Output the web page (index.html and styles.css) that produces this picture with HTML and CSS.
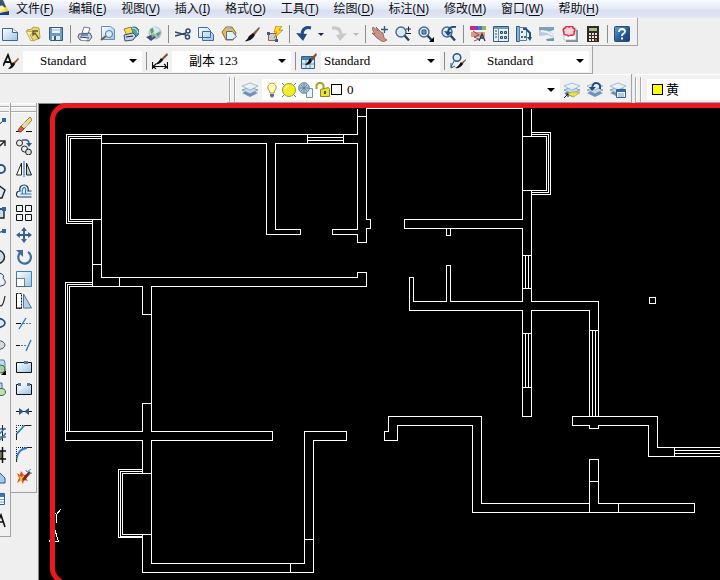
FILE: index.html
```html
<!DOCTYPE html>
<html lang="zh-CN">
<head>
<meta charset="utf-8">
<title>CAD</title>
<link rel="stylesheet" href="styles.css">
</head>
<body>
<svg class="defs" aria-hidden="true">
  <defs>
    <linearGradient id="page" x1="0" y1="0" x2="1" y2="1"><stop offset="0" stop-color="#fff"/><stop offset="1" stop-color="#9cc4e4"/></linearGradient>
    <linearGradient id="help" x1="0" y1="0" x2="1" y2="1"><stop offset="0" stop-color="#6fa0cc"/><stop offset=".5" stop-color="#2b629c"/><stop offset="1" stop-color="#123c70"/></linearGradient>
    <symbol id="layers" viewBox="0 0 16 16">
      <path d="M0 11l8-3 8 3-8 4z" fill="#6f93b5"/><path d="M0 8l8-3 8 3-8 4z" fill="#c3d8ea" stroke="#587c9f" stroke-width=".6"/><path d="M0 4l8-3 8 3-8 4z" fill="#e8f1f8" stroke="#86a6c2" stroke-width=".7"/>
    </symbol>
    <symbol id="lens" viewBox="0 0 16 16">
      <path d="M9.500 9.500l4.500 5" stroke="#27415e" stroke-width="2.400"/><circle cx="6" cy="6" r="5" fill="#d9eaf6" stroke="#47688a" stroke-width="1.400"/><path d="M3 5q1-2 3-2" stroke="#fff" fill="none"/>
    </symbol>
    <symbol id="brush" viewBox="0 0 16 16">
      <path d="M15 1L8 8l2 2 6-8z" fill="#8b5736"/><path d="M9 7l2 2-2 3q-4 4-8 3 3-2 4-5z" fill="#151515"/>
    </symbol>
    <symbol id="printer" viewBox="0 0 16 16">
      <path d="M5 7L7 1l6 1-2 6z" fill="#fff" stroke="#557" stroke-width=".8"/><path d="M2 8l11-1 2 4-3 4-9-1-2-3z" fill="#c4d0e2" stroke="#3b4d72" stroke-width=".9"/><path d="M3 11l9 1M4 9h7" stroke="#34466c"/><path d="M5 12l5 .5-1 2-5-.5z" fill="#fff"/>
    </symbol>
  </defs>
</svg>

<nav class="menubar" aria-label="菜单">
  <svg class="app" viewBox="0 0 9 16"><path d="M0 1l4 1 5 9-9 1z" fill="#f3d535"/><path d="M0 0h3l3 7-6 2z" fill="#35567b"/><path d="M0 6q3-2 5 3l-5 3z" fill="#fff5a5"/><path d="M0 13l9-2v4H0z" fill="#183d83"/></svg>
  <a href="#">文件(<u>F</u>)</a><a href="#">编辑(<u>E</u>)</a><a href="#">视图(<u>V</u>)</a><a href="#">插入(<u>I</u>)</a><a href="#">格式(<u>O</u>)</a><a href="#">工具(<u>T</u>)</a><a href="#">绘图(<u>D</u>)</a><a href="#">标注(<u>N</u>)</a><a href="#">修改(<u>M</u>)</a><a href="#">窗口(<u>W</u>)</a><a href="#">帮助(<u>H</u>)</a>
</nav>

<div class="row">
  <div class="toolbar standard">
    <button aria-label="新建"><svg viewBox="0 0 16 16"><path d="M.5 2.500h10l5 4v8H.5z" fill="url(#page)" stroke="#3c668e"/><path d="M10.500 2.500v4h5" fill="#fff" stroke="#3c668e"/></svg></button>
    <button aria-label="打开"><svg viewBox="0 0 16 16"><path d="M2 4l5-1 1-2 6 1 1 10-7 3z" fill="#ead77c" stroke="#a88d35" stroke-width=".8"/><path d="M1 5l8 1-4 3 3 5-2 1z" fill="#faefa9" stroke="#a88d35" stroke-width=".7"/><path d="M13 5H8v4l2-2 4 6" stroke="#5c5526" stroke-width="1.300" fill="none"/></svg></button>
    <button aria-label="保存"><svg viewBox="0 0 16 16"><path d="M1.500 1.500h13v13h-12l-1-1z" fill="#6d9cc3" stroke="#335b82"/><path d="M4 2h8v5H4z" fill="#edf5fa"/><path d="M4 4h8" stroke="#9ab6cc"/><path d="M4 10h8v4H4z" fill="#e1e9ef"/><path d="M6 10h2v4H6z" fill="#37597c"/></svg></button>
    <span class="sep"></span>
    <button aria-label="打印"><svg><use href="#printer"/></svg></button>
    <button aria-label="打印预览"><svg viewBox="0 0 16 16"><path d="M1.500.5h9l4 3v10h-13z" fill="url(#page)" stroke="#688caf"/><path d="M6 10l-5 4" stroke="#765c45" stroke-width="2"/><circle cx="9" cy="8" r="3.500" fill="#d9edf8" stroke="#547492"/></svg></button>
    <button aria-label="发布"><svg viewBox="0 0 16 16"><circle cx="11" cy="6" r="5" fill="#4fa1a8" stroke="#275c70"/><path d="M9 2q5 0 6 5" stroke="#d7f1e9" fill="none"/><path d="M1 3l7-2 2 6-6 3z" fill="#f6dc50" stroke="#756014" stroke-width=".7"/><path d="M1 9l9-2 3 3-3 4-8 1z" fill="#c7d5e6" stroke="#394c70"/><path d="M3 11l7-1" stroke="#222"/></svg></button>
    <button aria-label="三维 DWF"><svg viewBox="0 0 16 16"><circle cx="9" cy="7" r="6.500" fill="#a5bccd"/><path d="M5 2q5-3 9 2l-3 4-4-1-3 2q-1-5 1-7z" fill="#d9e9ef"/><path d="M4 3l3-1 1 4-3 2zM10 7l5-1-3 5z" fill="#5c9d75"/><path d="M0 11l5-2 5 2-5 4z" fill="#3c4f80"/><path d="M5 8l4 1-3 3z" fill="#88b34a"/></svg></button>
    <span class="sep"></span>
    <button aria-label="剪切"><svg viewBox="0 0 16 16"><path d="M0 6l11 3M0 10l11-3" stroke="#36465a" stroke-width="1.300"/><g fill="none" stroke="#2b496a" stroke-width="1.500"><circle cx="13" cy="5" r="2"/><circle cx="12.500" cy="11" r="2"/></g></svg></button>
    <button aria-label="复制"><svg viewBox="0 0 16 16"><path d="M.5 1.500h9l3 3v7H.5zM4.500 5.500h8l3 3v6h-11z" fill="url(#page)" stroke="#3d6d98"/></svg></button>
    <button aria-label="粘贴"><svg viewBox="0 0 16 16"><path d="M1 6l4-5h6l4 6-3 7H5z" fill="#ddc05f" stroke="#8e6e21"/><path d="M5 2l3-2 3 3z" fill="#9aa8b6"/><path d="M5.500 5.500h6l4 5-4 3h-6z" fill="#e3f0fa" stroke="#4c7192"/></svg></button>
    <button aria-label="特性匹配"><svg><use href="#brush"/></svg></button>
    <button aria-label="块编辑器"><svg viewBox="0 0 16 16"><path d="M1.500 7.500h8v7h-8z" fill="#bdd1e1" stroke="#b55b2a"/><path d="M0 6h3v3H0zM8 13h3v3H8z" fill="#345f89"/><path d="M9 0h6l-3 4h4l-9 8 3-6H7z" fill="#ffd62c" stroke="#b07800" stroke-width=".7"/></svg></button>
    <span class="sep"></span>
    <button aria-label="放弃"><svg viewBox="0 0 16 16"><path d="M15 2Q7 0 6 8" fill="none" stroke="#234b83" stroke-width="3"/><path d="M0 7l11 1-4 7z" fill="#234b83"/></svg></button>
    <button class="caret" aria-label="放弃列表"></button>
    <button aria-label="重做"><svg viewBox="0 0 16 16"><path d="M1 2q8-1 9 6" fill="none" stroke="#c8c8c8" stroke-width="3"/><path d="M16 7L5 9l4 6z" fill="#c8c8c8"/></svg></button>
    <button class="caret off" aria-label="重做列表"></button>
    <span class="sep"></span>
    <button aria-label="实时平移"><svg viewBox="0 0 16 16"><path d="M1 1l5 4-2-4 5 5 2 1 1 5 3 2-4 2-6-4-5-5 3 1-3-5z" fill="#cd9286" stroke="#855c5b" stroke-width=".8"/><path d="M12.500 0v7M9 3.500h7" stroke="#31577e" stroke-width="1.300"/></svg></button>
    <button aria-label="实时缩放"><svg viewBox="0 0 16 16"><use href="#lens"/><path d="M11 3h5M13.500.5v5M11 7.500h5" stroke="#222"/></svg></button>
    <button aria-label="窗口缩放"><svg viewBox="0 0 16 16"><use href="#lens"/><path d="M4 4h4v4H4z" fill="#7198b9" stroke="#31577e"/><path d="M16 11v5h-5z"/></svg></button>
    <button aria-label="缩放上一个"><svg viewBox="0 0 16 16"><use href="#lens"/><path d="M15 1Q8 0 7 6" stroke="#234b78" stroke-width="2" fill="none"/><path d="M3 5l8 1-4 4z" fill="#234b78"/></svg></button>
    <span class="sep"></span>
    <button aria-label="特性"><svg viewBox="0 0 16 16"><path d="M0 0h4v4H0z" fill="#e6225a"/><path d="M4 0h4v4H4z" fill="#7940c9"/><path d="M8 0h4v4H8z" fill="#3f75d5"/><path d="M12 0h4v4h-4z" fill="#8abe45"/><path d="M1 6h14v5H1z" fill="#df9889"/><path d="M3 5l6 4-5 2 5 2-5 2" stroke="#73545b" fill="none"/><path d="M9 15l3-7 3 7M10 12h4" stroke="#223a52" fill="none" stroke-width="1.300"/></svg></button>
    <button aria-label="设计中心"><svg viewBox="0 0 16 16"><path d="M.5.500h15v15H.5z" fill="#e5f1f8" stroke="#32597f"/><path d="M1 1h14v2H1z" fill="#6f9abd"/><path d="M5.500 3v12" stroke="#6e91b0"/><path d="M2 5h2M2 8h2M2 11h2" stroke="#284d72"/><path d="M7.500 5.500h2v2h-2zM11.500 5.500h2v2h-2zM7.500 10.500h2v2h-2zM11.500 10.500h2v2h-2z" fill="#9ebdd4" stroke="#2b4b6d"/></svg></button>
    <button aria-label="工具选项板"><svg viewBox="0 0 16 16"><path d="M.5.500h3v15h-3z" fill="#8fb2cf" stroke="#32597f"/><path d="M3.500 1.500h7v13h-7z" fill="#e5f1f8" stroke="#567d9f"/><path d="M5 5h2v2H5zM5 10h2v2H5zM8 10h2v2H8z" fill="#426f98"/><path d="M7 3h3l4 4v6" stroke="#29507a" stroke-width="2" fill="none"/><path d="M11 11h5l-2 4z" fill="#29507a"/></svg></button>
    <button aria-label="图纸集管理器"><svg viewBox="0 0 16 16"><path d="M0 1h15v3l-6 2-9-1z" fill="#7aa2ba"/><path d="M0 4l9 1 6 3v4l-6-3-9 1z" fill="#b9cbd5"/><path d="M2 5l6 1 7 4" stroke="#eaf3f7" stroke-width="2" fill="none"/><path d="M7 13l8-1v3H8z" fill="#7195ae"/></svg></button>
    <button aria-label="标记集管理器"><svg viewBox="0 0 16 16"><path d="M4 4h12v12H4z" fill="#83929f"/><path d="M2 2h12v12H2z" fill="#fff" stroke="#8aa" stroke-width=".6"/><path d="M3 2q2-3 4-1 4-2 4 1 3 1 1 4 1 4-3 3-3 2-4 0-4 0-3-3-2-3 1-4z" fill="#f6d3da" stroke="#dd2841" stroke-width="1.500"/></svg></button>
    <button aria-label="计算器"><svg viewBox="0 0 16 16"><path d="M2 0h12v16H2z" fill="#302926"/><path d="M4 2h8v3H4z" fill="#a3be8d"/><path d="M4 7h2v2H4zM7 7h2v2H7zM10 7h2v2h-2zM4 10h2v2H4zM7 10h2v2H7zM10 10h2v2h-2zM4 13h2v2H4zM7 13h2v2H7z" fill="#e9e0db"/><path d="M10 13h2v2h-2z" fill="#c93f31"/></svg></button>
    <span class="sep"></span>
    <button aria-label="帮助"><svg viewBox="0 0 16 16"><rect x=".5" y=".5" width="15" height="15" rx="1" fill="url(#help)" stroke="#244d7c"/><path d="M5 6q0-3 3-3t3 2.500q0 1.500-2 2.500-1 .5-1 2" fill="none" stroke="#fff" stroke-width="1.800"/><path d="M7 11.500h2v2H7z" fill="#fff"/></svg></button>
  </div>
</div>

<div class="row">
  <div class="toolbar styles">
    <label class="field"><svg viewBox="0 0 16 16" aria-label="文字样式"><path d="M0 13L5 2l4 11M2 9h6" fill="none" stroke="#111" stroke-width="1.800"/><path d="M15 5l-5 5 1 2 5-6z" fill="#8b5736"/><path d="M10 9l2 2q-2 5-7 5 3-3 5-7z" fill="#111"/></svg><span class="combo pad"><select><option>Standard</option></select></span></label>
    <span class="sep"></span>
    <label class="field"><svg viewBox="0 0 16 16" aria-label="标注样式"><path d="M.5 9v7M15.500 9v7M1 13.500h14M4 11l-3 2.500L4 16M12 11l3 2.500-3 2.500" stroke="#111" fill="none" stroke-width="1.200"/><path d="M15 0L8 7l2 1 6-6z" fill="#825135"/><path d="M9 5l2 2q-3 5-8 4 3-1 6-6z" fill="#111"/></svg><span class="combo pad"><select><option>副本 123</option></select></span></label>
    <span class="sep"></span>
    <label class="field"><svg viewBox="0 0 16 16" aria-label="表格样式"><path d="M.5 3.500h13v12H.5z" fill="#dcebf6" stroke="#315f93"/><path d="M1 4h12v3H1z" fill="#4d81b5"/><path d="M1 11h12M5 7v8M9 7v8" stroke="#6293c0"/><path d="M15 0L9 6l2 2 5-6z" fill="#825135"/><path d="M9 5l2 3q-2 4-7 4 3-2 5-7z" fill="#111"/></svg><span class="combo"><select><option>Standard</option></select></span></label>
    <span class="sep"></span>
    <label class="field"><svg viewBox="0 0 16 16" aria-label="多重引线样式"><circle cx="7" cy="4.500" r="3.800" fill="#dcecf8" stroke="#28588a" stroke-width="1.500"/><path d="M4 8l-3 6M1 10v5l4-2" stroke="#28588a" fill="none"/><path d="M16 6l-5 4 1 2 4-5z" fill="#825135"/><path d="M11 9l2 2q-3 5-8 4 3-1 6-6z" fill="#111"/></svg><span class="combo pad"><select><option>Standard</option></select></span></label>
  </div>
</div>

<div class="row layer-row">
  <div class="toolbar layer">
    <span class="grip"></span>
    <button aria-label="图层特性"><svg><use href="#layers"/></svg></button>
    <label class="combo layers-combo" aria-label="图层">
      <span class="marks">
        <svg viewBox="0 0 16 16"><path d="M6 11q0-2-2-4-1-5 4-6 5 1 4 6-2 2-2 4z" fill="#fffbc1" stroke="#b39a28"/><path d="M6 12h4v2l-2 2-2-2z" fill="#57718c"/></svg>
        <svg viewBox="0 0 16 16"><path d="M1 1l14 14M15 1L1 15" stroke="#4d7c9c"/><circle cx="8" cy="8" r="6.500" fill="#f2ec25" stroke="#9d9e31"/><path d="M4 7q1-3 4-3" stroke="#fffdc5" stroke-width="1.500" fill="none"/></svg>
        <svg viewBox="0 0 16 16"><path d="M8.500 6.500h6v9h-6z" fill="#e9f1f5" stroke="#7294a7"/><circle cx="6" cy="6" r="5.300" fill="#a6c0cd" stroke="#6a899d"/><path d="M1 6h10M6 1v10M3 3l6 6M9 3L3 9" stroke="#557f98" stroke-width=".8"/></svg>
        <svg viewBox="0 0 16 16"><path d="M1.500 7V3l2-2h3l2 2v5" fill="none" stroke="#a5a32c" stroke-width="2"/><path d="M5.500 7.500l8-2 1 2v7h-9z" fill="#e8e337" stroke="#8d8a22"/><path d="M9 9h2v3H9z" fill="#5d5a13"/></svg>
      </span>
      <i class="swatch white"></i>
      <select><option>0</option></select>
    </label>
    <button aria-label="置为当前"><svg viewBox="0 0 16 16"><use href="#layers"/><path d="M3 12l5-2 8 0-6 5z" fill="#e6df4e" stroke="#aaa029" stroke-width=".6"/><path d="M0 16l4-4M1.500 12H4v3" stroke="#111" fill="none"/></svg></button>
    <button aria-label="上一个图层"><svg viewBox="0 0 16 16"><use href="#layers"/><path d="M13 7Q14 1 9 1 6 1 5 6" fill="none" stroke="#244d7b" stroke-width="2"/><path d="M2 5h7L5 9z" fill="#244d7b"/></svg></button>
    <button aria-label="图层状态"><svg viewBox="0 0 16 16"><use href="#layers"/><path d="M6.500 7.500h9v8h-9z" fill="#eff7fd" stroke="#31618f"/><path d="M7 8h8v2H7z" fill="#386ca1"/><path d="M8 12h6M8 14h6" stroke="#7d9eba"/></svg></button>
  </div>
  <div class="toolbar properties">
    <span class="grip"></span>
    <label class="combo color-combo" aria-label="颜色"><i class="swatch yellow"></i><select><option>黄</option></select></label>
  </div>
</div>

<main class="workspace">
  <div class="toolbar side draw">
    <span class="grip"></span>
    <button aria-label="直线"><svg viewBox="0 0 16 16"><path d="M2 14L14 3" stroke="#222"/><path d="M12 1h4v4h-4z" fill="#32669f"/></svg></button>
    <button aria-label="构造线"><svg viewBox="0 0 16 16"><path d="M1 15L14 3M10 2h5v5" stroke="#222" fill="none" stroke-width="1.400"/></svg></button>
    <button aria-label="多段线"><svg viewBox="0 0 16 16"><path d="M2 4h9a4 4 0 010 8H3" stroke="#28588b" fill="none" stroke-width="2"/></svg></button>
    <button aria-label="正多边形"><svg viewBox="0 0 16 16"><path d="M1 7l7-5 7 5-3 8H4z" fill="#dceaf6" stroke="#222" stroke-width="1.400"/></svg></button>
    <button aria-label="矩形"><svg viewBox="0 0 16 16"><path d="M1 4h13v9H1z" fill="#c9dff0" stroke="#222" stroke-width="1.400"/><path d="M12 2h4v4h-4z" fill="#32669f"/></svg></button>
    <button aria-label="圆弧"><svg viewBox="0 0 16 16"><path d="M3 15Q3 6 14 4" stroke="#222" fill="none"/><path d="M12 2h4v4h-4z" fill="#32669f"/></svg></button>
    <button aria-label="圆"><svg viewBox="0 0 16 16"><circle cx="8" cy="8" r="6.500" fill="#c9dff0" stroke="#222" stroke-width="1.400"/></svg></button>
    <button aria-label="修订云线"><svg viewBox="0 0 16 16"><path d="M4 3q4-3 8 0 3 2 1 4 4 4 1 7-5 3-9 0-5-4-1-11z" fill="#eaf2f7" stroke="#33475c"/></svg></button>
    <button aria-label="样条曲线"><svg viewBox="0 0 16 16"><path d="M1 14q3-15 7-5t7-6" stroke="#333" fill="none" stroke-width="1.300"/></svg></button>
    <button aria-label="椭圆"><svg viewBox="0 0 16 16"><ellipse cx="8" cy="8" rx="7" ry="4.500" fill="#d9e9f5" stroke="#23496e" stroke-width="1.600"/></svg></button>
    <button aria-label="椭圆弧"><svg viewBox="0 0 16 16"><ellipse cx="8" cy="8" rx="7" ry="4.500" fill="#d5d9dd" stroke="#48525c"/></svg></button>
    <button aria-label="插入块"><svg viewBox="0 0 16 16"><path d="M1 1h13l1 3v7H1z" fill="#c3dbee" stroke="#5383a9"/><circle cx="11" cy="10" r="4" fill="#accba6" stroke="#3b704b"/><path d="M16 11v5h-5z"/></svg></button>
    <button aria-label="创建块"><svg viewBox="0 0 16 16"><path d="M2 2h10v8H2z" fill="#c3dbee" stroke="#396894"/><ellipse cx="11" cy="11" rx="4.500" ry="3.500" fill="#c4dfb5" stroke="#386c3b"/></svg></button>
    <button aria-label="点"><svg viewBox="0 0 16 16"><path d="M7 7h2v2H7z"/></svg></button>
    <button aria-label="图案填充"><svg viewBox="0 0 16 16"><path d="M0 4h16M0 12h16M12.500 0v16M4 0v16" stroke="#222"/><path d="M1 11L9 1M4 15L15 3M10 15l6-7" stroke="#377abc" stroke-width="1.500"/></svg></button>
    <button aria-label="渐变色"><svg viewBox="0 0 16 16"><path d="M4 4h8v8H4z" fill="#6f7e5a"/><path d="M0 4h16M0 12h16M12.500 0v16M4 0v16" stroke="#111" stroke-width="1.500"/></svg></button>
    <button aria-label="面域"><svg viewBox="0 0 16 16"><path d="M1 14V6l7-4 7 7v5z" fill="#a8c9e5" stroke="#28588b"/></svg></button>
    <button aria-label="表格"><svg viewBox="0 0 16 16"><path d="M1 2.500h13.500v11H1z" fill="#fff" stroke="#2c65a0"/><path d="M1 3h13v3H1z" fill="#3d78b5"/><path d="M1 8.500h13M1 11h13" stroke="#6d9cc8"/></svg></button>
    <button aria-label="多行文字"><svg viewBox="0 0 16 16"><path d="M6 14l5-12 4 12M8 9h6" fill="none" stroke="#111" stroke-width="1.600"/></svg></button>
  </div>
  <div class="toolbar side modify">
    <span class="grip"></span>
    <button aria-label="删除"><svg viewBox="0 0 16 16"><path d="M0 14.500h4M10 14.500h6" stroke="#111"/><path d="M14 0l2 3-8 9-3-3z" fill="#f4dc6f" stroke="#7a6631" stroke-width=".8"/><path d="M9 5l3 3-2 2-3-3z" fill="#d3dce6"/><path d="M5 9l3 3-3 3H3l-1-2z" fill="#df5648" stroke="#762d29" stroke-width=".7"/></svg></button>
    <button aria-label="复制对象"><svg viewBox="0 0 16 16"><circle cx="3.500" cy="4" r="3" fill="#eee" stroke="#222"/><circle cx="8.500" cy="10" r="3" fill="#eee" stroke="#222"/><circle cx="12.500" cy="13" r="2.900" fill="#d4dde4" stroke="#222"/><path d="M6 1h4q3 0 3 4" fill="none" stroke="#305f96" stroke-width="1.500"/><path d="M10 4h6l-3 4z" fill="#305f96"/></svg></button>
    <button aria-label="镜像"><svg viewBox="0 0 16 16"><path d="M5.500 2v12H.5z" fill="#fff" stroke="#222"/><path d="M10.500 2v12h5z" fill="#b7cfe0" stroke="#222"/><path d="M8 0v16" stroke="#2b83cb" stroke-width="1.200"/></svg></button>
    <button aria-label="偏移"><svg viewBox="0 0 16 16"><path d="M15.500 14H3C-.5 14-.5 8 4 8 2 0 14 0 12 8h3.500" fill="#e4eff8" stroke="#223a50" stroke-width="1.200"/><path d="M15.500 11H4.500M6.500 11C5 3 11 3 9.500 8v3" fill="none" stroke="#317fc4" stroke-width="1.200"/></svg></button>
    <button aria-label="阵列"><svg viewBox="0 0 16 16"><path d="M.5.500h6v6h-6zM9.500.500h6v6h-6zM.5 9.500h6v6h-6zM9.500 9.500h6v6h-6z" fill="#edf4f8" stroke="#111"/></svg></button>
    <button aria-label="移动"><svg viewBox="0 0 16 16"><path d="M8 1v14M1 8h14" stroke="#385f87" stroke-width="2"/><path d="M8 0l3 4H5zM8 16l3-4H5zM0 8l4-3v6zM16 8l-4-3v6z" fill="#3b658f"/></svg></button>
    <button aria-label="旋转"><svg viewBox="0 0 16 16"><path d="M4 4a6.300 6.300 0 108-1" fill="none" stroke="#406d9e" stroke-width="2.200"/><path d="M0 1h7v7z" fill="#406d9e"/></svg></button>
    <button aria-label="缩放"><svg viewBox="0 0 16 16"><path d="M.5.500h15v15H.5z" fill="url(#page)" stroke="#417eb4"/><path d="M.5 7.500h8v8h-8z" fill="#fff" stroke="#111" stroke-dasharray="1 1"/></svg></button>
    <button aria-label="拉伸"><svg viewBox="0 0 16 16"><path d="M.5.500h5v15h-5z" fill="#fff" stroke="#111" stroke-dasharray="2 1"/><path d="M7.500 1l8 14h-8z" fill="#b6d0e5" stroke="#4c7494"/><path d="M.5 1v14h5" fill="none" stroke="#111"/></svg></button>
    <button aria-label="修剪"><svg viewBox="0 0 16 16"><path d="M0 8.500h5" stroke="#111"/><path d="M7 8.500h9" stroke="#4e7eaa" stroke-dasharray="2 1"/><path d="M3 14L10 3" stroke="#2473bd" stroke-width="1.300"/></svg></button>
    <button aria-label="延伸"><svg viewBox="0 0 16 16"><path d="M0 8.500h4" stroke="#111"/><path d="M5 8.500h6" stroke="#4e7eaa" stroke-dasharray="2 1"/><path d="M10 14l5-11" stroke="#2473bd" stroke-width="1.300"/></svg></button>
    <button aria-label="打断于点"><svg viewBox="0 0 16 16"><path d="M.5 3.500h15v10H.5z" fill="url(#page)" stroke="#111"/><path d="M8 2h4v3H8z" fill="#547c9f"/></svg></button>
    <button aria-label="打断"><svg viewBox="0 0 16 16"><path d="M1 4h14v9H1z" fill="url(#page)"/><path d="M3 3.500H.5v10h15v-10H13" fill="none" stroke="#111"/><path d="M2 2h3v3H2zM11 2h3v3h-3z" fill="#547c9f"/></svg></button>
    <button aria-label="合并"><svg viewBox="0 0 16 16"><path d="M0 8.500h16" stroke="#111"/><path d="M3 5l5 3.500L3 12zM13 5L8 8.500l5 3.500z" fill="#355979"/></svg></button>
    <button aria-label="倒角"><svg viewBox="0 0 16 16"><path d="M.5 15V.5H9" stroke="#111" fill="none" stroke-dasharray="1 1"/><path d="M.5 15V9l8-8.500h7" stroke="#222" fill="none"/><path d="M.5 9l8-8.500" stroke="#2d7cc2" stroke-width="1.600"/></svg></button>
    <button aria-label="圆角"><svg viewBox="0 0 16 16"><path d="M.5 15V.5H11" stroke="#111" fill="none" stroke-dasharray="1 1"/><path d="M.5 15Q0 2 11 .5h5" fill="none" stroke="#222"/><path d="M1 11Q2 2 11 1" fill="none" stroke="#2d7cc2" stroke-width="1.800"/></svg></button>
    <button aria-label="分解"><svg viewBox="0 0 16 16"><path d="M1 4l3 2 1-4 3 4 4-1-2 4 2 3-4-1-1 4-2-4-4 3 2-5z" fill="#e44b22"/><path d="M3 7l3 1 2-2v3l-3 4z" fill="#ffc529"/><path d="M6 10l7-8 2 2-7 8z" fill="#6a3026"/><path d="M11 3l4-3M13 5l3-1M10 1l1 2" stroke="#5589b6"/></svg></button>
  </div>
  <section class="canvas" aria-label="平面图">
    <svg class="plan" role="img" aria-label="户型平面图">
      <g transform="translate(-39 -104)">
        <g class="walls" transform="translate(.5 .5)">
          <path d="M101 134V277H357V272H366V286H151V431H272V440H151V563H304V431H346V440H313V572H142V534H151M142 473V440H65V282H92V219M101 134H66V223H92M92 221H68V136H101M101 138H70V219H101M92 264H101M119 277V286"/>
          <path d="M92 282V286M92 284H67V431M142 286H69V431M65 431H142V403H151M142 286V314H151"/>
          <path d="M101 134H357V108M101 143H266V234H300V229H275V143H357V229H332V234H357V242H366V228H370V219H366V108H522V219H404V228H522V301H450V265H446V301H413V277H409V310H522V416H531V310H589V416M357 116H366M307 134V143M343 134V143M307 137H343M307 140H343"/>
          <path d="M446 228V235H450V228M531 108V136M522 136H546V190H522V136M531 132H550V194H531M531 134H548V192H531M522 190V219M531 190V301H598V416M522 255H531M522 288H531M525 255V288M528 255V288M522 333H531M522 387H531M525 333V387M528 333V387M589 330H598M592 330V416M595 330V416"/>
          <path d="M2000 447H657V416H572V425H589V428H598V425H648V456H2000M674 447V456M674 450H2000M674 453H2000"/>
          <path d="M589 503H481V416H388V431H384V440H397V425H472V512H694V503H598V459H589V512M589 481H598M618 503V512"/>
          <path d="M142 469H118V537H142M142 471H120V536H142M151 473H122V534H151M142 469V473M304 539H313M290 563V572"/>
          <path d="M649 297H655V303H649Z"/>
          <path d="M60 509L56 514V522M52 510L56 514M54 528L49 541H58Z"/>
        </g>
        <path class="frame" d="M2000 105.500H67A14.500 14.500 0 0 0 52.500 120V570Q53 576 61 582"/>
      </g>
    </svg>
  </section>
</main>
</body>
</html>
```
FILE: styles.css
```css
* { box-sizing: border-box; }

body {
  margin: 0;
  height: 100vh;
  overflow: hidden;
  display: flex;
  flex-direction: column;
  background: #efefef;
  color: #111;
  font: 12px/16px "Noto Sans", "Noto Sans CJK SC", sans-serif;
}

.defs { position: absolute; width: 0; height: 0; }

.menubar {
  flex: none;
  height: 18px;
  display: flex;
  gap: 15px;
  background: linear-gradient(#f8fafd, #e6ebf6 45%, #d7def0 60%, #e3e8f5);
}
.menubar a { color: #111; text-decoration: none; white-space: nowrap; line-height: 18px; }
.menubar u { text-underline-offset: 2px; }
.app { width: 9px; height: 16px; margin-right: -8px; }

.row { flex: none; display: flex; height: 28px; }
.layer-row { height: 29px; padding-left: 227px; }

.toolbar {
  display: flex;
  align-items: center;
  background: #f1f1f1;
  border: solid #a3a3a3;
  border-width: 0 1px 1px 0;
  box-shadow: inset 0 1px #fff;
}
.toolbar button {
  flex: none;
  width: 23px;
  height: 22px;
  padding: 0;
  border: 0;
  background: none;
  display: grid;
  place-items: center;
}
.toolbar svg { width: 16px; height: 16px; flex: none; display: block; }

.sep { flex: none; width: 6px; height: 18px; background: linear-gradient(#8c8c8c, #8c8c8c) center / 1px 100% no-repeat; }

.standard { margin-left: -2px; padding: 5px 4px 0 0; }
.toolbar .caret { width: 12px; }
.caret::after { content: ""; border: solid transparent; border-width: 3px 3px 0; border-top-color: #1b2358; }
.caret.off::after { border-top-color: #bbb; }

.styles { padding: 3px 3px 0 1px; }
.styles .sep { width: 8px; }
.field { display: flex; align-items: center; }
.field svg { margin: 0 4px 0 2px; }
.field .combo { width: 119px; }

.combo {
  display: flex;
  align-items: center;
  height: 21px;
  background: #fff;
}
.combo::after {
  content: "";
  flex: none;
  border: solid transparent;
  border-width: 4px 4px 0;
  border-top-color: #000;
  margin: 0 5px 0 -13px;
  pointer-events: none;
}
.combo select {
  flex: 1;
  min-width: 0;
  height: 20px;
  padding: 0 0 0 3px;
  border: 0;
  background: none;
  color: #000;
  appearance: none;
  font: 13px/20px "Liberation Serif", "Noto Sans CJK SC", serif;
}
.combo.pad select { padding-left: 17px; }

.layer { padding: 3px 2px 0 2px; }
.grip { flex: none; width: 8px; height: 25px; border: solid #aaa; border-width: 0 1px; box-shadow: inset 1px 0 #fff, 1px 0 #fff; }
.layer .grip { width: 6px; margin-right: 3px; }
.layers-combo { width: 298px; margin-left: 1px; }
.layers-combo select { padding-left: 5px; }
.marks { display: flex; gap: 1px; padding-left: 2px; }
.swatch { flex: none; width: 11px; height: 11px; border: 1px solid #000; }
.white { background: #fff; }
.yellow { background: #ff0; }

.properties { flex: 1; margin-left: 3px; padding: 3px 0 0; border-right: 0; }
.properties .grip { width: 6px; margin-right: 6px; }
.color-combo { flex: 1; padding-left: 5px; }
.color-combo::after { visibility: hidden; }

.workspace { flex: 1; min-height: 0; display: flex; align-items: flex-start; }
.side { flex: none; flex-direction: column; padding: 3px 0 4px; }
.side .grip { width: 100%; height: 6px; margin-bottom: 2px; border-width: 1px 0; box-shadow: inset 0 1px #fff, 0 1px #fff; }
.draw { width: 11px; align-items: flex-end; padding-right: 1px; overflow: hidden; }
.modify { width: 26px; }

.canvas {
  flex: 1;
  align-self: stretch;
  margin-left: 1px;
  border: solid #888;
  border-width: 1px 0 0 1px;
  background: #000;
}
.plan { display: block; width: 100%; height: 100%; overflow: visible; }
.walls { fill: none; stroke: #fff; stroke-width: 1; shape-rendering: crispEdges; }
.frame { fill: none; stroke: #ea1920; stroke-width: 5; }
```
